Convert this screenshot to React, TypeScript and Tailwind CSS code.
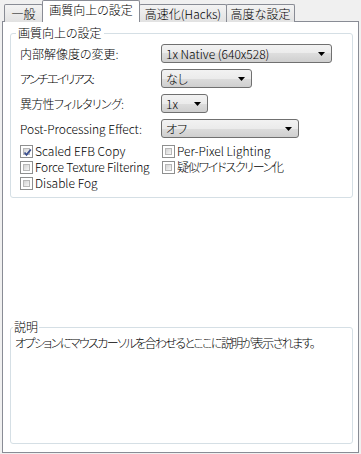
import type { ReactNode } from 'react';

const FONT = "font-['Noto_Sans_CJK_JP',sans-serif] font-light [font-feature-settings:'palt'] text-[12px] text-black";

function Tab({ children, active, width }: { children: ReactNode; active?: boolean; width: string }) {
  if (active) {
    return (
      <div
        className={`${width} -ml-px h-[22px] relative z-20 flex justify-center pt-[3px] leading-[12px] bg-white border border-b-0 border-[#898c95] rounded-t-[2px]`}
      >
        {children}
      </div>
    );
  }
  return (
    <div
      className={`${width} -ml-px first:ml-0 h-[18px] flex items-center justify-center leading-[12px] border border-b-0 border-[#898c95] rounded-t-[2px] bg-gradient-to-b from-[#f3f3f3] to-[#e2e2e2]`}
    >
      {children}
    </div>
  );
}

function Combo({ value, width }: { value: string; width: string }) {
  return (
    <div
      className={`${width} h-[19px] flex items-center justify-between pl-[4px] pr-[6px] leading-[12px] border border-[#707070] rounded-[3px] bg-[linear-gradient(to_bottom,#f2f2f2_0%,#ebebeb_50%,#dddddd_50%,#cfcfcf_100%)]`}
    >
      <span className="whitespace-nowrap">{value}</span>
      <svg width="7" height="4" viewBox="0 0 7 4" className="shrink-0">
        <path d="M0 0h7L3.5 4z" fill="#000" />
      </svg>
    </div>
  );
}

function Row({ label, tight, children }: { label: string; tight?: string; children: ReactNode }) {
  return (
    <div className="flex items-center h-[19px]">
      <div className={`w-[141px] leading-[12px] whitespace-nowrap ${tight ?? ''}`}>{label}</div>
      {children}
    </div>
  );
}

function Check({ label, checked, tight }: { label: string; checked?: boolean; tight?: string }) {
  return (
    <div className="flex items-center h-[16px]">
      <div className="w-[13px] h-[13px] shrink-0 border border-[#8e8f8f] bg-white p-[2px]">
        <div className="w-full h-full relative border border-[#b8b8b8] bg-gradient-to-br from-[#d4d4d4] to-[#f6f6f6]">
          {checked && (
            <svg width="9" height="9" viewBox="0 0 9 9" className="absolute -left-[1px] -top-[1px]">
              <path d="M1.5 4.5L3.5 6.8L7.8 1.5" stroke="#3b4f8f" strokeWidth="1.8" fill="none" />
            </svg>
          )}
        </div>
      </div>
      <span className={`ml-[2px] leading-[12px] whitespace-nowrap ${tight ?? ''}`}>{label}</span>
    </div>
  );
}

export default function App() {
  return (
    <div className={`w-[361px] h-[454px] bg-[#f0f0f0] overflow-hidden ${FONT}`}>
      {/* tab strip */}
      <div className="flex items-end h-[22px] pl-[4px] relative z-10">
        <Tab width="w-[39px]">一般</Tab>
        <Tab width="w-[98px]" active>
          画質向上の設定
        </Tab>
        <Tab width="w-[88px]">高速化(Hacks)</Tab>
        <Tab width="w-[69px]">高度な設定</Tab>
      </div>

      {/* page */}
      <div className="ml-[2px] -mt-px w-[357px] h-[432px] border border-[#898c95] bg-white">
        <fieldset className="ml-[7px] mt-[5px] w-[343px] border border-[#d5dfe5] rounded-[3px]">
          <legend className="ml-[5px] px-[2px] leading-[12px]">画質向上の設定</legend>
          <div className="pl-[9px] pt-[5px] pb-[6px] flex flex-col">
            <div className="flex flex-col gap-[6px]">
              <Row label="内部解像度の変更:">
                <Combo value="1x Native (640x528)" width="w-[171px]" />
              </Row>
              <Row label="アンチエイリアス:" tight="tracking-[-1.8px]">
                <Combo value="なし" width="w-[91px]" />
              </Row>
              <Row label="異方性フィルタリング:" tight="tracking-[-0.7px]">
                <Combo value="1x" width="w-[47px]" />
              </Row>
              <Row label="Post-Processing Effect:">
                <Combo value="オフ" width="w-[138px]" />
              </Row>
            </div>
            <div className="mt-[5px] grid grid-cols-[142px_1fr]">
              <Check label="Scaled EFB Copy" checked />
              <Check label="Per-Pixel Lighting" />
              <Check label="Force Texture Filtering" tight="tracking-[-0.2px]" />
              <Check label="疑似ワイドスクリーン化" tight="tracking-[-1.3px]" />
              <Check label="Disable Fog" />
            </div>
          </div>
        </fieldset>

        <fieldset className="ml-[7px] mt-[123px] w-[343px] h-[123px] border border-[#d5dfe5] rounded-[3px]">
          <legend className="ml-[2px] px-[1px] leading-[12px]">説明</legend>
          <div className="pl-[4px] pt-[4px] leading-[12px] whitespace-nowrap tracking-[-1.6px]">
            オプションにマウスカーソルを合わせるとここに説明が表示されます。
          </div>
        </fieldset>
      </div>
    </div>
  );
}
